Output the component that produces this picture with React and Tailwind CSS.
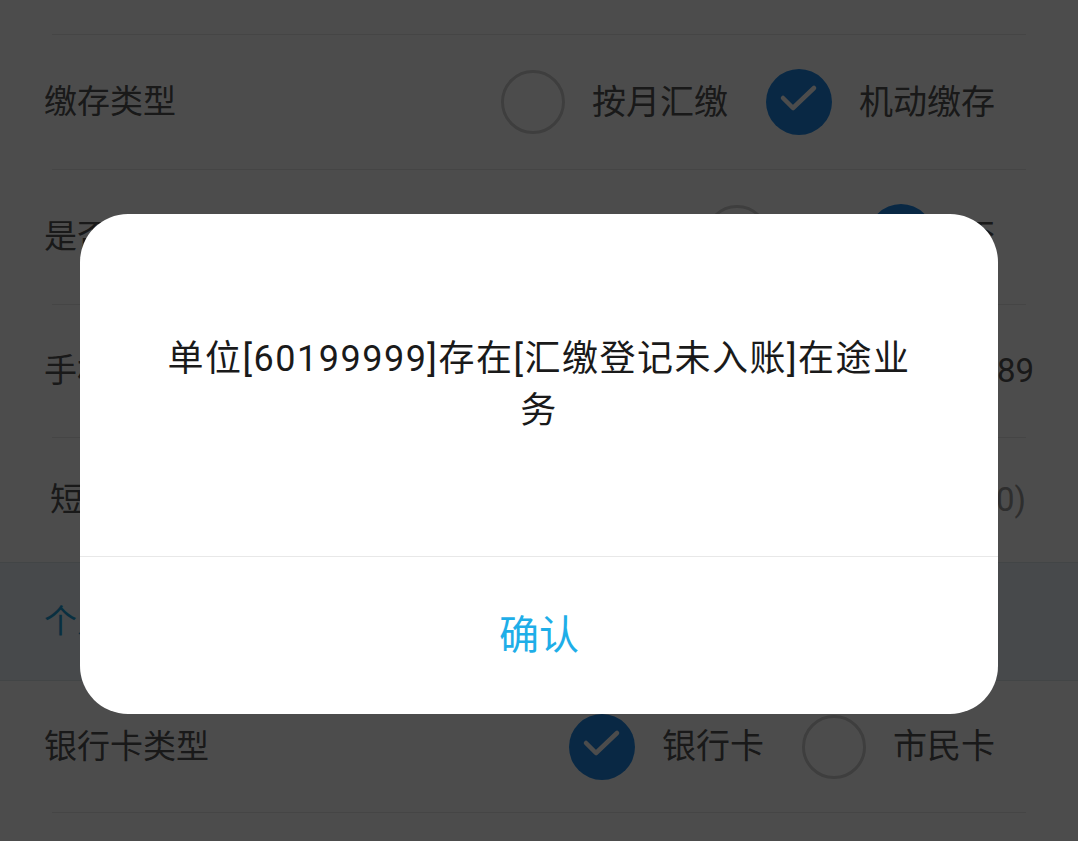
import React from 'react';

function Radio({ checked }) {
  if (checked) {
    return (
      <span className="flex h-[66px] w-[66px] shrink-0 items-center justify-center rounded-full bg-[#1e88e5]">
        <svg width="66" height="66" viewBox="0 0 66 66" fill="none">
          <path d="M17 29 L27 39 L48 19" stroke="#fff" strokeWidth="4.5" strokeLinecap="round" strokeLinejoin="round" />
        </svg>
      </span>
    );
  }
  return <span className="h-[64px] w-[64px] shrink-0 rounded-full border-[3px] border-[#cfcfcf]" />;
}

function Options({ items }) {
  return (
    <div className="flex items-center">
      {items.map((it, i) => (
        <div key={it.label} className={i > 0 ? 'ml-[38px] flex items-center' : 'flex items-center'}>
          <Radio checked={it.checked} />
          <span className="ml-[27px] text-[34px] text-[#555]">{it.label}</span>
        </div>
      ))}
    </div>
  );
}

function Row({ h, label, children, labelPad = 'pl-[44px]', right = 'pr-[83px]', line = true }) {
  return (
    <div>
      <div className={`flex items-center justify-between ${labelPad} ${right} ${h}`}>
        <span className="text-[33px] text-[#555]">{label}</span>
        {children}
      </div>
      {line && <div className="mx-[52px] h-px bg-[#e6e6e6]" />}
    </div>
  );
}

export default function App() {
  return (
    <div className="relative h-[841px] w-[1078px] overflow-hidden bg-white font-['Roboto','Noto_Sans_CJK_SC',sans-serif]">
      {/* page behind the dialog */}
      <div>
        <div className="h-[34px]" />
        <div className="mx-[52px] h-px bg-[#e6e6e6]" />
        <Row h="h-[134px]" label="缴存类型">
          <Options items={[{ label: '按月汇缴' }, { label: '机动缴存', checked: true }]} />
        </Row>
        <Row h="h-[134px]" label="是否发送短信">
          <Options items={[{ label: '是' }, { label: '否', checked: true }]} />
        </Row>
        <Row h="h-[132px]" label="手机号码" right="pr-[44px]">
          <span className="text-[33px] text-[#555]">138****6789</span>
        </Row>
        <Row h="h-[124px]" label="短信内容" labelPad="pl-[50px]" right="pr-[52px]" line={false}>
          <span className="text-[33px] text-[#999]">(0/70)</span>
        </Row>
        <div className="flex h-[119px] items-center border-y border-[#dde6ec] bg-[#eef5fa] pl-[44px]">
          <span className="text-[33px] text-[#1e9fd8]">个人账户信息</span>
        </div>
        <Row h="h-[131px]" label="银行卡类型">
          <Options items={[{ label: '银行卡', checked: true }, { label: '市民卡' }]} />
        </Row>
        <div className="h-[40px]" />
      </div>

      {/* dim layer */}
      <div className="absolute inset-0 bg-black/70" />

      {/* dialog */}
      <div className="absolute inset-x-0 top-[214px] flex justify-center">
        <div className="w-[918px] overflow-hidden rounded-[48px] bg-white">
          <div className="flex h-[342px] items-center justify-center">
            <p className="w-[760px] text-center text-[36px] leading-[52px] tracking-[1.5px] text-[#1a1a1a]">
              单位[60199999]存在[汇缴登记未入账]在途业务
            </p>
          </div>
          <div className="h-px bg-[#e8e8e8]" />
          <button className="flex h-[157px] w-full items-center justify-center text-[40px] text-[#1eaee8]">
            确认
          </button>
        </div>
      </div>
    </div>
  );
}
